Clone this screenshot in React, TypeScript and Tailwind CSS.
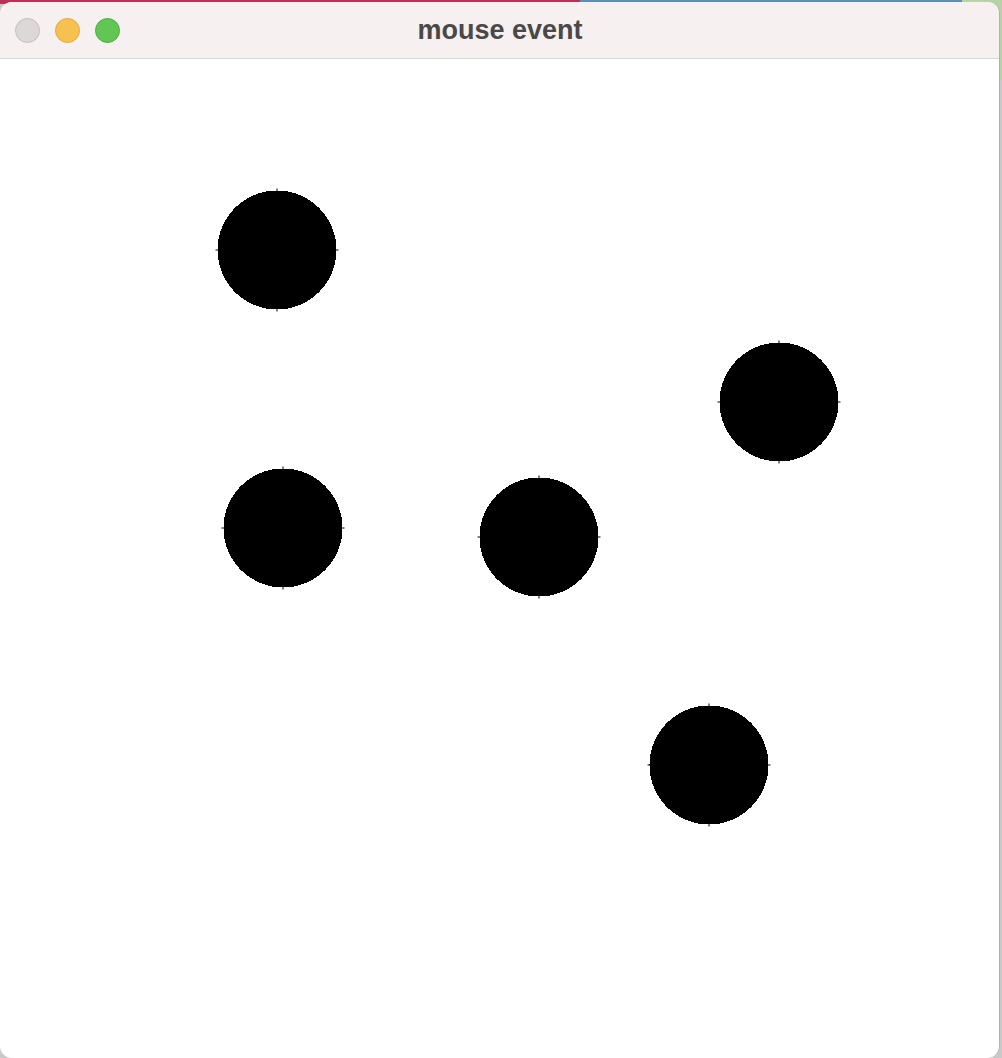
const circles = [
  { x: 277, y: 250 },
  { x: 779, y: 402 },
  { x: 283, y: 528 },
  { x: 539, y: 537 },
  { x: 709, y: 765 },
];

const TOP = 59;
const R = 59.5;

function TrafficLight({ fill, stroke }: { fill: string; stroke: string }) {
  return (
    <span
      className="block h-[25px] w-[25px] rounded-full border"
      style={{ backgroundColor: fill, borderColor: stroke }}
    />
  );
}

export default function App() {
  return (
    <div className="relative h-[1058px] w-[1002px] overflow-hidden bg-[#c9c9c9]">
      {/* desktop bits peeking behind the window corners */}
      <div className="absolute left-0 top-0 flex h-[4px] w-full">
        <div className="h-full w-[580px] bg-[#b8325a]" />
        <div className="h-full flex-1 bg-[#5b8db5]" />
      </div>
      <div className="absolute right-0 top-0 h-[80px] w-[40px] bg-[#b7d3a6]" />

      <div className="relative mt-[2px] flex h-[1056px] w-[1000px] flex-col overflow-hidden rounded-[12px] border-r border-[#b0b0b0] bg-white">
        <div className="relative flex h-[57px] shrink-0 items-center border-b border-[#d9d6d6] bg-[#f6f0f0] px-[15px]">
          <div className="flex gap-[15px]">
            <TrafficLight fill="#dcd8d8" stroke="#c3bfbf" />
            <TrafficLight fill="#f6c14f" stroke="#dfa93b" />
            <TrafficLight fill="#62c655" stroke="#4fae42" />
          </div>
          <div
            className="absolute inset-0 flex items-center justify-center pl-[1px] text-[27px] font-bold text-[#4b4848]"
            style={{ fontFamily: '"Liberation Sans", Arial, sans-serif' }}
          >
            mouse event
          </div>
        </div>

        <svg width={1000} height={999} className="block">
          {circles.map((c, i) => {
            const cy = c.y - TOP;
            return (
              <g key={i}>
                <circle cx={c.x} cy={cy} r={R} fill="#000" shapeRendering="crispEdges" />
                <line x1={c.x} y1={cy - R - 2} x2={c.x} y2={cy + R + 2} stroke="#000" strokeWidth={1} />
                <line x1={c.x - R - 2} y1={cy} x2={c.x + R + 2} y2={cy} stroke="#000" strokeWidth={1} />
              </g>
            );
          })}
        </svg>
      </div>
    </div>
  );
}
